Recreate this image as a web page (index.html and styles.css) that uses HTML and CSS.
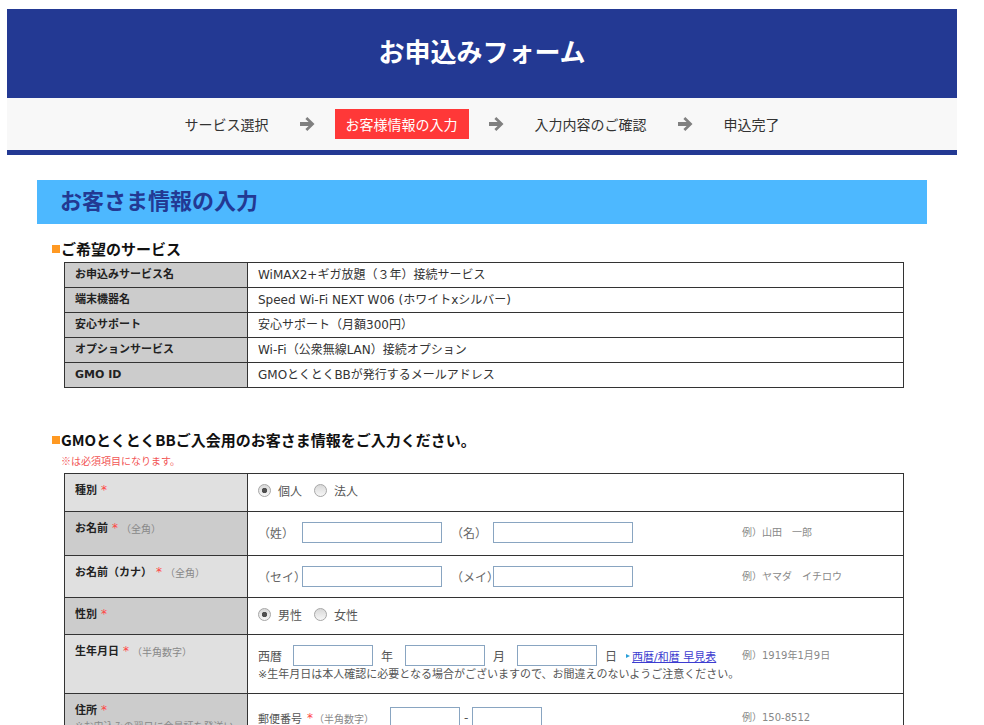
FILE: index.html
```html
<!DOCTYPE html>
<html lang="ja">
<head>
<meta charset="utf-8">
<title>お申込みフォーム</title>
<link rel="stylesheet" href="styles.css">
</head>
<body>
<div class="page">
  <header class="hero">
    <h1 class="hero-title">お申込みフォーム</h1>
  </header>
  <nav class="steps">
    <span class="step">サービス選択</span>
    <svg class="arrow" viewBox="0 0 17 14"><path d="M1 5.1h8.6L6.4 1.9 8.3 0l7.2 7-7.2 7-1.9-1.9 3.2-3.2H1z"/></svg>
    <span class="step is-active">お客様情報の入力</span>
    <svg class="arrow" viewBox="0 0 17 14"><path d="M1 5.1h8.6L6.4 1.9 8.3 0l7.2 7-7.2 7-1.9-1.9 3.2-3.2H1z"/></svg>
    <span class="step">入力内容のご確認</span>
    <svg class="arrow" viewBox="0 0 17 14"><path d="M1 5.1h8.6L6.4 1.9 8.3 0l7.2 7-7.2 7-1.9-1.9 3.2-3.2H1z"/></svg>
    <span class="step">申込完了</span>
  </nav>

  <main class="content">
    <h2 class="section-title">お客さま情報の入力</h2>

    <h3 class="sub"><span class="sq"></span>ご希望のサービス</h3>
    <table class="info">
      <tr><th>お申込みサービス名</th><td>WiMAX2+ギガ放題（３年）接続サービス</td></tr>
      <tr><th>端末機器名</th><td>Speed Wi-Fi NEXT W06 (ホワイトxシルバー)</td></tr>
      <tr><th>安心サポート</th><td>安心サポート（月額300円）</td></tr>
      <tr><th>オプションサービス</th><td>Wi-Fi（公衆無線LAN）接続オプション</td></tr>
      <tr><th>GMO ID</th><td>GMOとくとくBBが発行するメールアドレス</td></tr>
    </table>

    <h3 class="sub sub--gap"><span class="sq"></span>GMOとくとくBBご入会用のお客さま情報をご入力ください。</h3>
    <p class="req-note">※は必須項目になります。</p>

    <table class="form">
      <tr class="r1">
        <th>種別<span class="req">*</span></th>
        <td>
          <div class="radio-line">
            <label class="opt"><input class="radio" type="radio" name="kind" checked>個人</label>
            <label class="opt"><input class="radio" type="radio" name="kind">法人</label>
          </div>
        </td>
      </tr>
      <tr class="r2">
        <th>お名前<span class="req">*</span><span class="hint">（全角）</span></th>
        <td>
          <div class="field">
            <div class="field-main">
              <div class="line">
                <span class="pre">（姓）</span><input class="txt w140" type="text">
                <span class="pre pre--2">（名）</span><input class="txt w140" type="text">
              </div>
            </div>
            <div class="ex">例）山田　一郎</div>
          </div>
        </td>
      </tr>
      <tr class="r3">
        <th>お名前（カナ）<span class="req">*</span><span class="hint">（全角）</span></th>
        <td>
          <div class="field">
            <div class="field-main">
              <div class="line">
                <span class="pre">（セイ）</span><input class="txt w140" type="text">
                <span class="pre pre--2">（メイ）</span><input class="txt w140" type="text">
              </div>
            </div>
            <div class="ex">例）ヤマダ　イチロウ</div>
          </div>
        </td>
      </tr>
      <tr class="r4">
        <th>性別<span class="req">*</span></th>
        <td>
          <div class="radio-line">
            <label class="opt"><input class="radio" type="radio" name="sex" checked>男性</label>
            <label class="opt"><input class="radio" type="radio" name="sex">女性</label>
          </div>
        </td>
      </tr>
      <tr class="r5">
        <th>生年月日<span class="req">*</span><span class="hint">（半角数字）</span></th>
        <td>
          <div class="field">
            <div class="field-main">
              <div class="line">
                <span>西暦</span><input class="txt w80 first" type="text">
                <span class="unit">年</span><input class="txt w80" type="text">
                <span class="unit">月</span><input class="txt w80" type="text">
                <span class="unit unit--last">日</span><a class="cal-link" href="#">西暦/和暦 早見表</a>
              </div>
              <p class="note">※生年月日は本人確認に必要となる場合がございますので、お間違えのないようご注意ください。</p>
            </div>
            <div class="ex">例）1919年1月9日</div>
          </div>
        </td>
      </tr>
      <tr class="r6">
        <th>住所<span class="req">*</span><span class="th-note">※お申込みの翌日に会員証を発送いたします。お間違えのないようご入力ください。</span></th>
        <td>
          <div class="field">
            <div class="field-main">
              <div class="line">
                <span class="zip-label">郵便番号</span><span class="req req--inline">*</span><span class="hint hint--inline">（半角数字）</span>
                <input class="txt w70 zip" type="text"><span class="dash">-</span><input class="txt w70" type="text">
              </div>
              <div class="line line--gap">
                <span class="zip-label">都道府県</span><input class="txt w140 first" type="text">
              </div>
              <div class="line line--gap">
                <span class="zip-label">市区町村</span><input class="txt w140 first" type="text">
              </div>
            </div>
            <div class="ex">例）150-8512</div>
          </div>
        </td>
      </tr>
    </table>
  </main>
</div>
</body>
</html>
```

FILE: styles.css
```css
body {
  margin: 0;
  background: #fff;
  color: #333;
  font-family: "Noto Sans CJK JP", "Noto Sans", sans-serif;
}

.page {
  width: 950px;
  margin: 9px 0 0 7px;
}

/* header */
.hero {
  background: #233993;
  height: 89px;
  display: flex;
  align-items: center;
  justify-content: center;
}
.hero-title {
  margin: 0 0 6px;
  color: #fff;
  font-size: 26px;
  font-weight: 700;
  line-height: 1;
}

/* steps */
.steps {
  background: #f8f8f8;
  height: 52px;
  border-bottom: 5px solid #233993;
  display: flex;
  align-items: center;
  justify-content: center;
  gap: 19px;
}
.step {
  font-size: 14px;
  line-height: 30px;
  padding: 0 11px;
  color: #333;
}
.step.is-active {
  background: #ff3838;
  color: #fff;
}
.arrow {
  width: 17px;
  height: 14px;
  fill: #808080;
}

/* content */
.content {
  padding: 25px 30px 60px;
}
.section-title {
  margin: 0;
  background: #4db8ff;
  height: 44px;
  line-height: 38px;
  padding-left: 23px;
  color: #233993;
  font-size: 22px;
  font-weight: 700;
}

.sub {
  margin: 16px 0 4px;
  padding-left: 15px;
  display: flex;
  align-items: center;
  font-size: 15px;
  line-height: 18px;
  font-weight: 700;
  color: #111;
}
.sub--gap {
  margin-top: 43px;
}
.sq {
  width: 8px;
  height: 8px;
  background: #ff9922;
  margin-right: 1px;
  flex: none;
}

.req-note {
  margin: 5px 0;
  padding-left: 24px;
  font-size: 10px;
  line-height: 14px;
  color: #f25555;
}

/* tables */
.info,
.form {
  width: 840px;
  margin-left: 27px;
  border-collapse: collapse;
}
.info th,
.info td,
.form th,
.form td {
  border: 1px solid #333;
  font-family: "DejaVu Sans", "Noto Sans CJK JP", sans-serif;
}
.info th,
.form th {
  width: 162px;
  text-align: left;
  font-size: 11px;
  font-weight: 700;
  color: #222;
}
.info th {
  background: #ccc;
  padding: 0 10px;
  line-height: 24px;
}
.info td {
  padding: 0 10px;
  font-size: 12px;
  line-height: 24px;
  color: #333;
}

.form th {
  vertical-align: top;
  padding: 7px 10px 0;
  line-height: 18px;
}
.form tr:nth-child(odd) th {
  background: #e0e0e0;
}
.form tr:nth-child(even) th {
  background: #ccc;
}
.form td {
  vertical-align: top;
  padding: 0 10px;
  font-size: 12px;
  color: #555;
}
.form .r1 td { padding-top: 7px; padding-bottom: 12px; }
.form .r2 td { padding-top: 10px; padding-bottom: 12px; }
.form .r3 td { padding-top: 10px; padding-bottom: 10px; }
.form .r4 td { padding-top: 7px; padding-bottom: 11px; }
.form .r5 td { padding-top: 10px; padding-bottom: 9px; }
.form .r6 td { padding-top: 13px; padding-bottom: 14px; }

.req {
  color: #f44;
  font-weight: 400;
  font-size: 12px;
  margin-left: 4px;
}
.hint {
  color: #888;
  font-weight: 400;
  font-size: 10px;
  margin-left: 3px;
  position: relative;
  top: 1px;
}
.th-note {
  display: block;
  font-size: 10px;
  line-height: 14px;
  font-weight: 400;
  color: #888;
}

.field {
  display: flex;
  align-items: flex-start;
}
.field-main {
  flex: 1;
}
.ex {
  width: 151px;
  flex: none;
  font-size: 10px;
  line-height: 21px;
  color: #888;
}

.line {
  display: flex;
  align-items: center;
  height: 21px;
  white-space: nowrap;
}
.line--gap {
  margin-top: 8px;
}
.radio-line {
  display: flex;
  align-items: center;
  height: 18px;
}
.opt {
  display: inline-flex;
  align-items: center;
  margin-right: 12px;
}
.radio {
  appearance: none;
  -webkit-appearance: none;
  width: 13px;
  height: 13px;
  margin: 0 7px 0 0;
  border: 1px solid #a8a8a8;
  border-radius: 50%;
  background: linear-gradient(#d8d8d8, #f7f7f7);
  box-sizing: border-box;
}
.radio:checked {
  background: radial-gradient(circle, #4f4f4f 0 2.4px, transparent 3px), linear-gradient(#d8d8d8, #f7f7f7);
}

.txt {
  box-sizing: border-box;
  height: 21px;
  margin: 0;
  padding: 0 4px;
  border: 1px solid #89a5c1;
  background: #fff;
  font: inherit;
  flex: none;
}
.w140 { width: 140px; }
.w80 { width: 80px; }
.w70 { width: 70px; }
.first { margin-left: 11px; }

.pre {
  width: 44px;
  flex: none;
  color: #666;
}
.pre--2 {
  width: 42px;
  margin-left: 9px;
}

.unit {
  margin: 0 12px 0 8px;
}
.unit--last {
  margin-right: 9px;
}
.cal-link {
  display: inline-flex;
  align-items: center;
  font-size: 11px;
  color: #3c3cd0;
  text-decoration: underline;
}
.cal-link::before {
  content: "";
  width: 0;
  height: 0;
  border-left: 4px solid #2a9fd8;
  border-top: 2.5px solid transparent;
  border-bottom: 2.5px solid transparent;
  margin-right: 2px;
}
.note {
  margin: 0;
  font-size: 11px;
  line-height: 18px;
  color: #555;
}

.zip-label {
  font-size: 11px;
}
.req--inline {
  margin-left: 5px;
}
.hint--inline {
  margin-left: 1px;
}
.zip {
  margin-left: 16px;
}
.dash {
  margin: 0 4px;
}
```
